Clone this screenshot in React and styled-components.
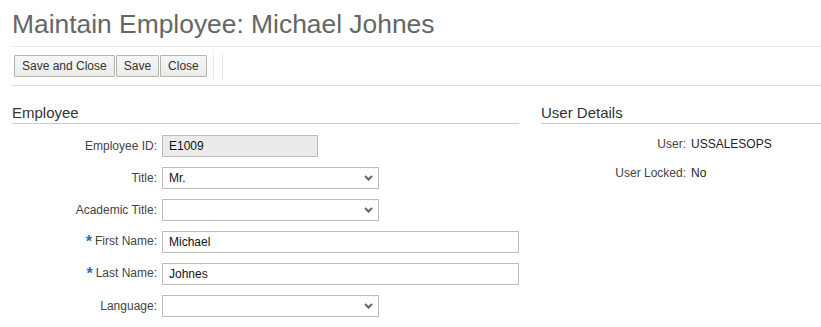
import React from 'react';
import styled, { createGlobalStyle } from 'styled-components';

const GlobalStyle = createGlobalStyle`
  body {
    margin: 0;
    background: #fff;
    font-family: "Liberation Sans", Arial, sans-serif;
  }
`;

const Page = styled.div`
  padding-left: 12px;
`;

const Title = styled.h1`
  margin: 0;
  padding-top: 8px;
  height: 38px;
  font-size: 26.4px;
  font-weight: normal;
  color: #666;
  line-height: 32px;
  border-bottom: 1px solid #ebebeb;
`;

const Toolbar = styled.div`
  display: flex;
  align-items: center;
  height: 38px;
  border-bottom: 1px solid #ddd;
  padding-left: 2px;
`;

const Button = styled.button`
  height: 22px;
  margin-right: 1px;
  padding: 0 7px;
  font-family: inherit;
  font-size: 12px;
  color: #333;
  background: linear-gradient(#f6f6f6, #ebebeb);
  border: 1px solid #b5b3ad;
  border-radius: 1px;
`;

const Divider = styled.div`
  width: 1px;
  height: 25px;
  background: #e6e6e6;
  margin-left: ${p => p.$gap}px;
`;

const Columns = styled.div`
  display: grid;
  grid-template-columns: 507px 280px;
  column-gap: 22px;
  padding-top: 18px;
`;

const SectionHeader = styled.h2`
  margin: 0 0 11px;
  font-size: 15px;
  font-weight: normal;
  color: #333;
  line-height: 18px;
  padding-bottom: 1px;
  border-bottom: 1px solid #ccc;
`;

const Form = styled.div`
  display: grid;
  grid-template-columns: 145px 1fr;
  column-gap: 5px;
  row-gap: ${p => p.$rowGap}px;
  align-items: center;
`;

const Label = styled.label`
  text-align: right;
  font-size: 12px;
  color: #444;
  white-space: nowrap;
`;

const Star = styled.span`
  color: #1a75bb;
  font-weight: bold;
  font-size: 16px;
  margin-right: 3px;
  vertical-align: -2px;
`;

const Value = styled.div`
  font-size: 12px;
  color: #222;
  line-height: 18px;
`;

const TextBox = styled.input`
  box-sizing: border-box;
  width: ${p => p.$w}px;
  height: 22px;
  padding: 0 6px;
  font-family: inherit;
  font-size: 12px;
  color: #111;
  border: 1px solid #bfbcb6;
  border-radius: 0;
  background: ${p => (p.readOnly ? '#ebebeb' : '#fff')};
  outline: none;
`;

const SelectWrap = styled.div`
  position: relative;
  width: 217px;
  height: 22px;
`;

const Select = styled.select`
  appearance: none;
  box-sizing: border-box;
  width: 100%;
  height: 22px;
  padding: 0 6px;
  font-family: inherit;
  font-size: 12px;
  color: #111;
  border: 1px solid #bfbcb6;
  border-radius: 0;
  background: #fff;
  outline: none;
`;

const Chevron = styled.svg`
  position: absolute;
  right: 6px;
  top: 8px;
  pointer-events: none;
`;

function Dropdown({ value, options }) {
  return (
    <SelectWrap>
      <Select defaultValue={value}>
        {options.map(o => (
          <option key={o} value={o}>{o}</option>
        ))}
      </Select>
      <Chevron width="9" height="6" viewBox="0 0 9 6">
        <path d="M1 1 L4.5 4.5 L8 1" fill="none" stroke="#666" strokeWidth="2" />
      </Chevron>
    </SelectWrap>
  );
}

export default function App() {
  return (
    <Page>
      <GlobalStyle />
      <Title>Maintain Employee: Michael Johnes</Title>
      <Toolbar>
        <Button>Save and Close</Button>
        <Button>Save</Button>
        <Button>Close</Button>
        <Divider $gap={5} />
        <Divider $gap={8} />
      </Toolbar>
      <Columns>
        <div>
          <SectionHeader>Employee</SectionHeader>
          <Form $rowGap={10}>
            <Label>Employee ID:</Label>
            <TextBox $w={156} readOnly defaultValue="E1009" />
            <Label>Title:</Label>
            <Dropdown value="Mr." options={['', 'Mr.', 'Ms.']} />
            <Label>Academic Title:</Label>
            <Dropdown value="" options={['', 'Dr.', 'Prof.']} />
            <Label><Star>*</Star>First Name:</Label>
            <TextBox $w={357} defaultValue="Michael" />
            <Label><Star>*</Star>Last Name:</Label>
            <TextBox $w={357} defaultValue="Johnes" />
            <Label>Language:</Label>
            <Dropdown value="" options={['', 'English', 'German']} />
          </Form>
        </div>
        <div>
          <SectionHeader>User Details</SectionHeader>
          <Form $rowGap={11}>
            <Label>User:</Label>
            <Value>USSALESOPS</Value>
            <Label>User Locked:</Label>
            <Value>No</Value>
          </Form>
        </div>
      </Columns>
    </Page>
  );
}
